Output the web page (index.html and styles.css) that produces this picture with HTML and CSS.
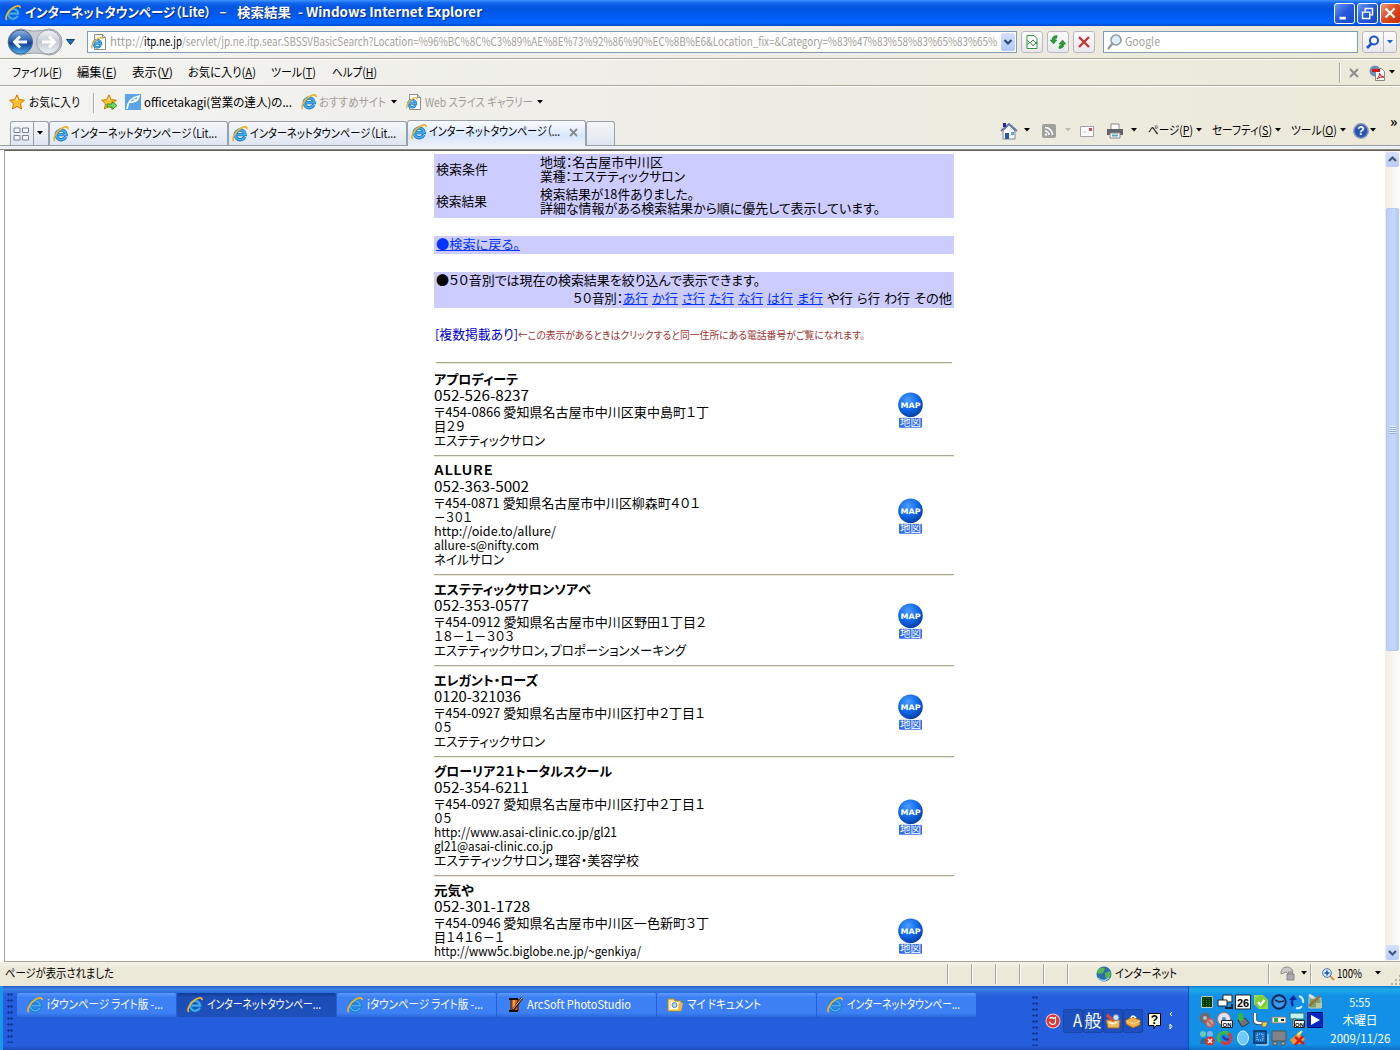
FILE: index.html
```html
<!DOCTYPE html>
<html lang="ja">
<head>
    <meta charset="UTF-8">
    <title>インターネットタウンページ（Lite） － 検索結果</title>
    <link rel="stylesheet" href="styles.css">
</head>
<body>
    <svg class="defs" width="0" height="0">
        <defs>
            <radialGradient id="ball" cx="40%" cy="30%" r="75%"><stop offset="0" stop-color="#4c9cff"/><stop offset=".55" stop-color="#0f68e8"/><stop offset="1" stop-color="#063a9c"/></radialGradient>
            <linearGradient id="back" x2="0" y2="1"><stop offset="0" stop-color="#8fb4e0"/><stop offset=".45" stop-color="#2a62b4"/><stop offset=".55" stop-color="#123f92"/><stop offset="1" stop-color="#4cb4f4"/></linearGradient>
            <linearGradient id="fwd" x2="0" y2="1"><stop offset="0" stop-color="#f4f6f8"/><stop offset=".5" stop-color="#c4cad2"/><stop offset="1" stop-color="#eef2f6"/></linearGradient>
            <symbol id="ie" viewBox="0 0 16 16">
                <path d="M12.800 10.800A5 4.800 0 1 1 13.200 8.600H4.500" fill="none" stroke="#1878c8" stroke-width="3.400"/>
                <path d="M12.800 10.800A5 4.800 0 1 1 13.200 8.600H4.500" fill="none" stroke="#48b0f0" stroke-width="1.600"/>
                <path d="M1.700 15C-.4 12.500 3 6 8 2.800 11.500.4 15.400-.2 15 3.200" fill="none" stroke="#ecb42c" stroke-width="1.700"/>
            </symbol>
            <symbol id="iepage" viewBox="0 0 16 16">
                <path d="M3.5.5h8l3 3v12h-11z" fill="#fff" stroke="#8c8c8c"/><path d="M11.5.5v3h3" fill="#ddd" stroke="#8c8c8c"/>
                <use href="#ie" x="0" y="3" width="12" height="12"/>
            </symbol>
            <symbol id="star" viewBox="0 0 16 16"><path d="M8 .8l2.200 4.800 5.200.6-3.900 3.500 1.100 5.300L8 12.400 3.400 15l1.100-5.300L.6 6.200l5.200-.6z" fill="#ffc02e" stroke="#c87800"/><path d="M8 3l1.200 3.600H6z" fill="#ffe890"/></symbol>
            <symbol id="down" viewBox="0 0 6 4"><path d="M0 0h6L3 3.5z"/></symbol>
            <symbol id="map" viewBox="0 0 26 36">
                <circle cx="12.500" cy="12.800" r="12.300" fill="url(#ball)"/>
                <text x="2.500" y="15.800" class="map-en" textLength="20" lengthAdjust="spacingAndGlyphs">MAP</text>
                <rect x="1" y="25.800" width="23" height="10" rx="1" fill="#2f6cee"/>
                <text x="2" y="34.400" class="map-ja" textLength="21" lengthAdjust="spacingAndGlyphs">地図</text>
            </symbol>
        </defs>
    </svg>

    <header class="titlebar">
        <svg class="i16"><use href="#ie"/></svg>
        <span data-w="186">インターネットタウンページ（Lite）</span>
        <span data-w="8">－</span>
        <span data-w="54">検索結果</span>
        <span data-w="184">- Windows Internet Explorer</span>
        <svg class="win-btn" viewBox="0 0 21 21"><path d="M5 14h7v3H5z" fill="#fff"/></svg>
        <svg class="win-btn" viewBox="0 0 21 21"><path d="M8 8V5h8v7h-3M5 9h8v7H5z" fill="none" stroke="#fff" stroke-width="1.600"/></svg>
        <svg class="win-btn close" viewBox="0 0 21 21"><path d="M5 5l10 10M15 5L5 15" stroke="#fff" stroke-width="2.400"/></svg>
    </header>

    <nav class="navbar">
        <svg width="56" height="28" viewBox="0 0 56 28">
            <path d="M14 1q14 4 28 0a13 13 0 0 1 0 26q-14-4-28 0A13 13 0 0 1 14 1z" fill="#c8ccd2" stroke="#9aa0a8"/>
            <circle cx="13.500" cy="14" r="12" fill="url(#back)" stroke="#41618e"/><path d="M20 14H8M13 8.500L7.500 14l5.500 5.500" fill="none" stroke="#fff" stroke-width="2.800"/>
            <circle cx="41.500" cy="14" r="12" fill="url(#fwd)" stroke="#9ca4ac"/><path d="M35 14h12M42 8.500l5.500 5.500-5.500 5.500" fill="none" stroke="#fff" stroke-width="2.800"/>
        </svg>
        <svg class="nav-arrow" viewBox="0 0 9 6"><path d="M.5.5h8L4.500 5.500z" fill="#1c6cb0" stroke="#14406c"/></svg>
        <div class="address">
            <svg class="i16"><use href="#iepage"/></svg>
            <div class="url"><span data-w="34">http://</span><b data-w="38">itp.ne.jp</b><span data-w="815">/servlet/jp.ne.itp.sear.SBSSVBasicSearch?Location=%96%BC%8C%C3%89%AE%8E%73%92%86%90%EC%8B%E6&amp;Location_fix=&amp;Category=%83%47%83%58%83%65%83%65%</span></div>
            <svg class="drop" viewBox="0 0 14 18"><path d="M3.500 7L7 10.500 10.500 7" fill="none" stroke="#2c4878" stroke-width="2.200"/></svg>
        </div>
        <svg class="tool" viewBox="1 1 20 20"><path d="M6 4.500h7l3 3v10H6z" fill="#fff" stroke="#3c9440"/><path d="M6 9l3 3 3-3 4 4M6 14l3-3 3 4 4-4" fill="none" stroke="#3c9440"/></svg>
        <svg class="tool" viewBox="1 1 20 20"><path d="M10 4.500q-5 0-5 4.500H3l3.500 4L10 9H8q0-2 2-2zM12 17.500q5 0 5-4.500h2l-3.500-4L12 13h2q0 2-2 2z" fill="#2c9c34" stroke="#1c7c24" stroke-width=".5"/></svg>
        <svg class="tool" viewBox="1 1 20 20"><path d="M6 6l10 10M16 6L6 16" stroke="#c03438" stroke-width="2.400"/></svg>
        <div class="search">
            <svg class="i16" viewBox="0 0 16 16"><path d="M6 9l-5 6" stroke="#999" stroke-width="2.400"/><circle cx="9" cy="6" r="5" fill="#d8efff" stroke="#8a98a8" stroke-width="1.500"/></svg>
            <span data-w="35">Google</span>
        </div>
        <svg class="tool wide" viewBox="1 1 33 20"><path d="M21.500 0v22" stroke="#b8b8c0"/><path d="M10 12l-5 5" stroke="#1c50d0" stroke-width="2.600"/><circle cx="12" cy="9.500" r="4" fill="#fff" stroke="#1c50d0" stroke-width="2"/><path d="M25 9h6l-3 3.500z" fill="#1464c8"/></svg>
    </nav>

    <div class="menubar">
        <span data-w="50">ファイル(<u>F</u>)</span>
        <span data-w="40">編集(<u>E</u>)</span>
        <span data-w="41">表示(<u>V</u>)</span>
        <span data-w="68">お気に入り(<u>A</u>)</span>
        <span data-w="45">ツール(<u>T</u>)</span>
        <span data-w="45">ヘルプ(<u>H</u>)</span>
        <i class="vline"></i>
        <svg width="10" height="10" viewBox="0 0 10 10"><path d="M1 1l8 8M9 1L1 9" stroke="#8c8c8c" stroke-width="2"/></svg>
        <svg class="i16" viewBox="0 0 16 16"><circle cx="6" cy="6" r="5.500" fill="#6890b8"/><path d="M6.500 3.500h6l3 3v9h-9z" fill="#fff" stroke="#888"/><path d="M3 4h8v3H3z" fill="#d01818"/><path d="M8 14q3-3 2.500-6 1 4 4.500 4-4-.5-7 2" fill="none" stroke="#d01818"/></svg>
        <svg class="down"><use href="#down"/></svg>
    </div>

    <div class="favbar">
        <svg class="i16"><use href="#star"/></svg>
        <span data-w="51">お気に入り</span>
        <i class="vline"></i>
        <svg class="i16" viewBox="0 0 16 16"><use href="#star"/><path d="M6 10h5V7.500l5 4-5 4V13H6z" fill="#70d858" stroke="#208818" stroke-width=".8"/></svg>
        <svg class="i16" viewBox="0 0 16 16"><path d="M0 0h16v16H0z" fill="#5ca4e8"/><path d="M2 15Q3 4 14 2q-1 5-6 6M5 8q4 1 5-3" fill="none" stroke="#fff" stroke-width="1.600"/></svg>
        <span data-w="148">officetakagi(営業の達人)の...</span>
        <svg class="i16"><use href="#ie"/></svg>
        <span class="dim" data-w="67">おすすめサイト</span>
        <svg class="down"><use href="#down"/></svg>
        <svg class="i16"><use href="#iepage"/></svg>
        <span class="dim" data-w="108">Web スライス ギャラリー</span>
        <svg class="down"><use href="#down"/></svg>
    </div>

    <div class="tabrow">
        <div class="quick">
            <svg width="17" height="14" viewBox="0 0 17 14"><path d="M1 1h6v4.500H1zM9.500 1h6v4.500h-6zM1 8.500h6V13H1zM9.500 8.500h6V13h-6z" fill="#f4f6fa" stroke="#7c8494"/></svg>
            <i></i>
            <svg class="down"><use href="#down"/></svg>
        </div>
        <div class="tab"><svg class="i16"><use href="#ie"/></svg><span data-w="146">インターネットタウンページ（Lit...</span></div>
        <div class="tab"><svg class="i16"><use href="#ie"/></svg><span data-w="146">インターネットタウンページ（Lit...</span></div>
        <div class="tab active"><svg class="i16"><use href="#ie"/></svg><span data-w="131">インターネットタウンページ（...</span><svg class="tab-x" viewBox="0 0 9 9"><path d="M1 1l7 7M8 1L1 8" stroke="#888" stroke-width="1.800"/></svg></div>
        <div class="tab blank"></div>
        <div class="commands">
            <svg width="18" height="18" viewBox="0 0 18 18"><path d="M3 9v8h12V9L9 3z" fill="#f8f8ff" stroke="#8088a0"/><path d="M1 9l8-7 8 7" fill="none" stroke="#6878a8" stroke-width="2"/><path d="M3 1h3v4H3z" fill="#2828a0"/><path d="M5 11h4v6H5z" fill="#2858b0"/><path d="M11 10h3v3h-3z" fill="#68a8d8"/></svg>
            <svg class="down"><use href="#down"/></svg>
            <svg width="14" height="14" viewBox="0 0 14 14"><rect width="14" height="14" rx="2" fill="#a0a09c"/><path d="M3 7a4 4 0 0 1 4 4M3 3.500A7.500 7.500 0 0 1 10.500 11" fill="none" stroke="#fff" stroke-width="1.500"/><circle cx="4" cy="10.500" r="1.200" fill="#fff"/></svg>
            <svg class="down pale"><use href="#down"/></svg>
            <svg width="14" height="11" viewBox="0 0 14 11"><path d="M.5.5h13v10H.5z" fill="#fcfcfc" stroke="#a0a0a8"/><path d="M9 2h3v3H9z" fill="#d84848"/><path d="M3 6h4" stroke="#ccc"/></svg>
            <svg class="i16" viewBox="0 0 16 16"><path d="M4 1h8v6H4z" fill="#fff" stroke="#888"/><path d="M0 6h16v6H0z" fill="#606468"/><path d="M3 10h10v5H3z" fill="#fff" stroke="#888"/><path d="M5 11.500h6v2H5z" fill="#58a8c0"/></svg>
            <svg class="down"><use href="#down"/></svg>
            <span data-w="45">ページ(<u>P</u>)</span>
            <svg class="down"><use href="#down"/></svg>
            <span data-w="60">セーフティ(<u>S</u>)</span>
            <svg class="down"><use href="#down"/></svg>
            <span data-w="46">ツール(<u>O</u>)</span>
            <svg class="down"><use href="#down"/></svg>
            <svg class="i16" viewBox="0 0 16 16"><circle cx="8" cy="8" r="7.200" fill="#2c54b4" stroke="#8c98b8" stroke-width="1.500"/><text x="8" y="12.200" class="q">?</text></svg>
            <svg class="down"><use href="#down"/></svg>
            <span class="more">»</span>
        </div>
    </div>

    <main class="viewport">
        <div class="page">
            <section class="panel conditions">
                <span data-w="52">検索条件</span>
                <div><p><span data-w="123">地域：名古屋市中川区</span></p><p><span data-w="145">業種：エステティックサロン</span></p></div>
                <span data-w="51">検索結果</span>
                <div><p><span data-w="154">検索結果が18件ありました。</span></p><p><span data-w="340">詳細な情報がある検索結果から順に優先して表示しています。</span></p></div>
            </section>
            <section class="panel"><a data-w="84">●検索に戻る。</a></section>
            <section class="panel kana">
                <p><span data-w="324">●５０音別では現在の検索結果を絞り込んで表示できます。</span></p>
                <p class="rows"><span class="lead" data-w="50">５０音別：</span><a data-w="25">あ行</a><a data-w="26">か行</a><a data-w="23">さ行</a><a data-w="25">た行</a><a data-w="25">な行</a><a data-w="26">は行</a><a data-w="26">ま行</a><span data-w="26">や行</span><span data-w="23">ら行</span><span data-w="26">わ行</span><span data-w="38">その他</span></p>
            </section>
            <p class="note"><span class="multi" data-w="83">[複数掲載あり]</span><small data-w="347">←この表示があるときはクリックすると同一住所にある電話番号がご覧になれます。</small></p>

            <article class="entry first">
                <div>
                    <h2><span data-w="84">アプロディーテ</span></h2>
                    <p class="tel"><span data-w="95">052-526-8237</span></p>
                    <p><span data-w="275">〒454-0866 愛知県名古屋市中川区東中島町１丁</span></p>
                    <p><span data-w="31">目２９</span></p>
                    <p><span data-w="111">エステティックサロン</span></p>
                </div>
                <svg class="map"><use href="#map"/></svg>
            </article>
            <article class="entry">
                <div>
                    <h2><span data-w="59">ＡＬＬＵＲＥ</span></h2>
                    <p class="tel"><span data-w="95">052-363-5002</span></p>
                    <p><span data-w="266">〒454-0871 愛知県名古屋市中川区柳森町４０１</span></p>
                    <p><span data-w="38">－３０１</span></p>
                    <p><span data-w="122">http://oide.to/allure/</span></p>
                    <p><span data-w="105">allure-s@nifty.com</span></p>
                    <p><span data-w="70">ネイルサロン</span></p>
                </div>
                <svg class="map"><use href="#map"/></svg>
            </article>
            <article class="entry">
                <div>
                    <h2><span data-w="157">エステティックサロンソアベ</span></h2>
                    <p class="tel"><span data-w="95">052-353-0577</span></p>
                    <p><span data-w="272">〒454-0912 愛知県名古屋市中川区野田１丁目２</span></p>
                    <p><span data-w="80">１８－１－３０３</span></p>
                    <p><span data-w="252">エステティックサロン，プロポーションメーキング</span></p>
                </div>
                <svg class="map"><use href="#map"/></svg>
            </article>
            <article class="entry">
                <div>
                    <h2><span data-w="104">エレガント・ローズ</span></h2>
                    <p class="tel"><span data-w="87">0120-321036</span></p>
                    <p><span data-w="271">〒454-0927 愛知県名古屋市中川区打中２丁目１</span></p>
                    <p><span data-w="18">０５</span></p>
                    <p><span data-w="111">エステティックサロン</span></p>
                </div>
                <svg class="map"><use href="#map"/></svg>
            </article>
            <article class="entry">
                <div>
                    <h2><span data-w="178">グローリア２１トータルスクール</span></h2>
                    <p class="tel"><span data-w="95">052-354-6211</span></p>
                    <p><span data-w="271">〒454-0927 愛知県名古屋市中川区打中２丁目１</span></p>
                    <p><span data-w="18">０５</span></p>
                    <p><span data-w="183">http://www.asai-clinic.co.jp/gl21</span></p>
                    <p><span data-w="119">gl21@asai-clinic.co.jp</span></p>
                    <p><span data-w="205">エステティックサロン，理容・美容学校</span></p>
                </div>
                <svg class="map"><use href="#map"/></svg>
            </article>
            <article class="entry last">
                <div>
                    <h2><span data-w="40">元気や</span></h2>
                    <p class="tel"><span data-w="96">052-301-1728</span></p>
                    <p><span data-w="275">〒454-0946 愛知県名古屋市中川区一色新町３丁</span></p>
                    <p><span data-w="70">目１４１６－１</span></p>
                    <p><span data-w="207">http://www5c.biglobe.ne.jp/~genkiya/</span></p>
                </div>
                <svg class="map"><use href="#map"/></svg>
            </article>
        </div>
        <div class="scrollbar">
            <svg class="sb-btn" viewBox="0 0 13 15"><path d="M3 9l3.500-3.500L10 9" fill="none" stroke="#40587c" stroke-width="2.200"/></svg>
            <div class="thumb"><i></i><i></i><i></i><i></i></div>
            <svg class="sb-btn" viewBox="0 0 13 15"><path d="M3 6l3.500 3.500L10 6" fill="none" stroke="#40587c" stroke-width="2.200"/></svg>
        </div>
    </main>

    <footer class="status">
        <span data-w="109">ページが表示されました</span>
        <i class="vline"></i><i class="vline"></i><i class="vline"></i><i class="vline"></i><i class="vline"></i><i class="vline"></i>
        <svg class="i16" viewBox="0 0 16 16"><circle cx="8" cy="8" r="7.500" fill="#2c6cb0"/><path d="M3 3q4-3 6 0l-2 4-4 1-2-2zM9 7l5-2q2 4-1 7l-3 2z" fill="#58b850"/><path d="M2 12q5 5 11 0" fill="none" stroke="#8cc8e8" stroke-width="1.500"/></svg>
        <span data-w="62">インターネット</span>
        <i class="vline"></i>
        <svg class="i16" viewBox="0 0 16 16"><path d="M1 8a6 6 0 0 1 12-2L9 9 6 6z" fill="#c8c8c4" stroke="#909090"/><path d="M7 8h7v6H7z" fill="#aaa" stroke="#888"/><path d="M8.500 8V6h4v2" fill="none" stroke="#888"/></svg>
        <svg class="down"><use href="#down"/></svg>
        <i class="vline"></i>
        <svg width="13" height="13" viewBox="0 0 13 13"><path d="M8 8l4 4" stroke="#c89848" stroke-width="2"/><circle cx="5" cy="5" r="4.300" fill="#e0f0ff" stroke="#3870b8"/><path d="M2.500 5h5M5 2.500v5" stroke="#1850b0" stroke-width="1.500"/></svg>
        <span data-w="25">100%</span>
        <svg class="down"><use href="#down"/></svg>
        <svg class="grip" viewBox="0 0 12 12"><path d="M9 1h2v2H9zM5 5h2v2H5zM9 5h2v2H9zM1 9h2v2H1zM5 9h2v2H5zM9 9h2v2H9z" fill="#b8b4a4"/></svg>
    </footer>

    <footer class="taskbar">
        <i class="dots"></i>
        <div class="tasks">
            <div class="task"><svg class="i16"><use href="#ie"/></svg><span data-w="116">iタウンページ ライト版 -...</span></div>
            <div class="task pressed"><svg class="i16"><use href="#ie"/></svg><span data-w="114">インターネットタウンペー...</span></div>
            <div class="task"><svg class="i16"><use href="#ie"/></svg><span data-w="116">iタウンページ ライト版 -...</span></div>
            <div class="task"><svg class="i16" viewBox="0 0 16 16"><path d="M4 2h7v12H4z" fill="#e05818" stroke="#301808"/><path d="M2 2h9M2 14h9" stroke="#181008" stroke-width="2"/><path d="M7 3v10" stroke="#f8c060" stroke-width="1.500"/><path d="M15 1L6 13" stroke="#301808" stroke-width="2.500"/><path d="M15 1L6 12" stroke="#f0c070"/></svg><span data-w="104">ArcSoft PhotoStudio</span></div>
            <div class="task"><svg class="i16" viewBox="0 0 16 16"><path d="M1 2h6l1 2h6v10H1z" fill="#fce890" stroke="#b08820"/><path d="M4 5h7v7H4z" fill="#fff"/><circle cx="7.500" cy="8" r="2.500" fill="#a8d8f8" stroke="#5888a8"/><path d="M12 6h4l-2 8h-3z" fill="#f0b840"/></svg><span data-w="74">マイ ドキュメント</span></div>
            <div class="task"><svg class="i16"><use href="#ie"/></svg><span data-w="113">インターネットタウンペー...</span></div>
        </div>
        <div class="langbar">
            <i class="dots"></i>
            <svg class="i16" viewBox="0 0 16 16"><circle cx="8" cy="8" r="7.500" fill="#f0c8c8"/><circle cx="8" cy="8" r="6.500" fill="#d83838"/><path d="M4.500 5.500q2-2 4 0l2-1v4q0 3-3 3-3-1-3-3" stroke="#fff" stroke-width="1.200" fill="none"/></svg>
            <b class="mode"><span data-w="9">A</span></b>
            <b><span data-w="17">般</span></b>
            <b><svg class="i16" viewBox="0 0 16 16"><path d="M1 7h14l-1 8H3z" fill="#f0b860" stroke="#a86818"/><path d="M2 2l7 6" stroke="#e04838" stroke-width="3"/><circle cx="11" cy="4.500" r="3" fill="#c8e8ff" stroke="#5880a8"/><path d="M4 9q4 3 8 0" fill="none" stroke="#fff0d0" stroke-width="2"/></svg></b>
            <b><svg class="i16" viewBox="0 0 16 16"><path d="M1 7l6-3 8 3v5l-7 3-7-4z" fill="#f0b04c" stroke="#a06010"/><path d="M6 5q1-4 5 0" fill="none" stroke="#fff" stroke-width="1.500"/><path d="M1 8l7 3 7-3" fill="none" stroke="#ffe0a0"/></svg></b>
            <svg width="14" height="16" viewBox="0 0 14 16"><path d="M.5.500h12v12H8l-2 3v-3H.500z" fill="#ffffe0" stroke="#000"/><text x="6.500" y="11" class="q dark">?</text></svg>
            <svg width="5" height="18" viewBox="0 0 5 18"><path d="M3 0L1 2l2 2M1 12v5l2-2.500z" fill="none" stroke="#fff"/></svg>
        </div>
        <div class="tray">
            <div class="icons">
                <svg viewBox="0 0 16 16"><path d="M2.500 2.500h11v11h-11z" fill="#083808" stroke="#b8c8b8"/><path d="M4.500 4v9M7.500 4v9M10.500 4v9" stroke="#188818" stroke-dasharray="1 1"/></svg>
                <svg viewBox="0 0 16 16"><path d="M6 1h9v7H6z" fill="#fff" stroke="#222"/><path d="M1 6h9v6H1z" fill="#fff" stroke="#222"/><path d="M8 14h7v-4" stroke="#222" fill="none" stroke-width="2"/></svg>
                <svg viewBox="0 0 16 16"><path d="M.5 1h15v14H.5z" fill="#fff" stroke="#222"/><text x="8" y="13" class="num">26</text></svg>
                <svg viewBox="0 0 16 16"><path d="M1 1h9l5 5v9H6L1 10z" fill="#98dc48"/><circle cx="8" cy="8" r="6" fill="#80cc38"/><path d="M5 8l2.500 3L11.500 6" stroke="#fff" stroke-width="2.200" fill="none"/></svg>
                <svg viewBox="0 0 16 16"><circle cx="8" cy="8" r="6.700" fill="#3c98e8" stroke="#082858" stroke-width="2"/><path d="M4 6l4 2 5-1" fill="none" stroke="#082858" stroke-width="1.500"/></svg>
                <svg viewBox="0 0 16 16"><path d="M4 12q-2-3 0-8" fill="none" stroke="#0828a0" stroke-width="2.500"/><path d="M0 6l4.500-5L8 6z" fill="#0828a0"/><path d="M10 2q5 2 4 7M13 12q-2 3-6 2" fill="none" stroke="#c8f0ff" stroke-width="2"/></svg>
                <svg viewBox="0 0 16 16"><path d="M2 4h12v10H2z" fill="#78a068" stroke="#c8d0c0"/><path d="M2 12L13 2" stroke="#b06030" stroke-width="2"/><path d="M9 9h6v5H9z" fill="#b8c8a0"/><path d="M2 1l5 3" stroke="#ddd" stroke-width="3"/></svg>
                <svg viewBox="0 0 16 16"><circle cx="6" cy="6" r="5.500" fill="#686c70"/><circle cx="6" cy="6" r="2" fill="#bbb"/><circle cx="11" cy="11" r="4" fill="#aaa" stroke="#d85848" stroke-width="1.500"/><path d="M8 8l6 6" stroke="#d85848" stroke-width="1.500"/></svg>
                <svg viewBox="0 0 16 16"><circle cx="7" cy="7" r="6.500" fill="#e8e0f0" stroke="#a87858"/><circle cx="7" cy="7" r="2" fill="#3c90d0"/><path d="M4.500 8.500h11v7h-11z" fill="#fff" stroke="#222"/><text x="10" y="14.500" class="on">ON</text></svg>
                <svg viewBox="0 0 16 16"><path d="M3 8l7-2 4 5-7 4z" fill="#707478" stroke="#333"/><path d="M2 2l6-1v5l2-1-4 5-4-4 2-1z" fill="#38b840"/></svg>
                <svg viewBox="0 0 16 16"><path d="M2 1v7q0 3 4 3h3" fill="none" stroke="#333" stroke-width="4"/><path d="M2 1v7q0 3 4 3h3" fill="none" stroke="#fff" stroke-width="2.500"/><path d="M9 10h6l-2 5H9z" fill="#f0d048" stroke="#666"/></svg>
                <svg viewBox="0 0 16 16"><path d="M1 5h14v6H1z" fill="#f8f8f8" stroke="#777"/><path d="M3 6h4v4H3z" fill="#38a838"/><path d="M10 8h3" stroke="#222" stroke-width="2"/></svg>
                <svg viewBox="0 0 16 16"><path d="M1 1h14v6H1z" fill="#c0f0f0" stroke="#187878"/><path d="M4 7h3v8H4z" fill="#eee" stroke="#555"/><path d="M5.500 8.500h10v7h-10z" fill="#fff" stroke="#222"/><text x="10.500" y="14.500" class="on">ON</text></svg>
                <svg viewBox="0 0 16 16"><path d="M.5.500h15v15H.5z" fill="#0828c0" stroke="#04106c"/><path d="M4 3l9 5-9 5z" fill="#fff"/></svg>
                <svg viewBox="0 0 16 16"><circle cx="4" cy="4" r="3" fill="#68c8b0"/><circle cx="11" cy="4" r="3" fill="#78b8e8"/><path d="M1 14q1-8 6-5l4 5z" fill="#386890"/><circle cx="11" cy="11" r="4.500" fill="#e03020"/><path d="M9 9l4 4M13 9l-4 4" stroke="#fff" stroke-width="1.500"/></svg>
                <svg viewBox="0 0 16 16"><path d="M3 12Q-1 6 5 3q5-2 6 2" stroke="#40b838" fill="none" stroke-width="3"/><path d="M12 3q4 6-1 10-4 2-6-2" stroke="#e03838" fill="none" stroke-width="3"/><path d="M6 6q2 5 6 3" stroke="#2438a8" fill="none" stroke-width="2.500"/></svg>
                <svg viewBox="0 0 16 16"><ellipse cx="8" cy="8" rx="5.500" ry="7" fill="#70c8fc" stroke="#d8f4ff"/></svg>
                <svg viewBox="0 0 16 16"><path d="M1 1h12v12H1z" fill="#186cc0" stroke="#08305c" stroke-width="1.500"/><path d="M4 4h6v6H4z" fill="none" stroke="#b8e0ff" stroke-dasharray="1 1"/><path d="M3 15h12V4" fill="none" stroke="#c8e4ff"/></svg>
                <svg viewBox="0 0 16 16"><path d="M1 1h14v10H1z" fill="#808488" stroke="#555"/><path d="M2 12h4v3H2zM10 12h4v3h-4z" fill="#aaa" stroke="#555"/></svg>
                <svg viewBox="0 0 16 16"><path d="M1 10l6-5 3-4 2 5 4 3-5 5H4z" fill="#f09830"/><path d="M6 7l9 7M14 6l-8 9" stroke="#d81818" stroke-width="2.500"/><path d="M9 5l4-4" stroke="#e8f088" stroke-width="2"/></svg>
            </div>
            <div class="clock">
                <span data-w="21">5:55</span>
                <span data-w="35">木曜日</span>
                <span data-w="60">2009/11/26</span>
            </div>
        </div>
    </footer>

    <script src="fit.js"></script>
</body>
</html>
```
FILE: styles.css
```css
:root {
    --chrome: #ece9d8;
    --line: #aca899;
    --panel: #ccccff;
    --link: #0033ff;
}

* {
    box-sizing: border-box;
}

body {
    margin: 0;
    width: 1400px;
    height: 1050px;
    overflow: hidden;
    background: #fff;
    color: #000;
    font: 12px/14px "Noto Sans CJK JP", "Liberation Sans", sans-serif;
    font-feature-settings: "palt";
}

p, h2 {
    margin: 0;
}

svg {
    display: block;
    flex: none;
}

.defs {
    position: absolute;
}

[data-w] {
    display: inline-block;
    justify-self: start;
    flex: none;
    white-space: pre;
    transform-origin: 0 50%;
    translate: 0 -1px;
}

.i16 {
    width: 16px;
    height: 16px;
}

.down {
    width: 6px;
    height: 4px;
    translate: 0 -1px;
}

.pale {
    fill: #c0bdb0;
}

.dim {
    color: #a09e96;
}

.vline {
    width: 2px;
    height: 20px;
    border-left: 1px solid var(--line);
    border-right: 1px solid #fff;
}

/* window title */
.titlebar {
    display: grid;
    grid-template-columns: 20px 194px 18px 61px 1036px 23px 23px 21px;
    align-items: center;
    height: 26px;
    padding-left: 5px;
    background: linear-gradient(#3c94fc 0, #1464ec 3px, #0054e0 8px, #0060fc 20px, #0066ff 23px, #0044c4 26px);
    color: #fff;
    font-size: 13px;
    font-weight: bold;
    text-shadow: 1px 1px #0a2a7c;
}

.win-btn {
    width: 21px;
    height: 21px;
    border: 1px solid #fff;
    border-radius: 3px;
    background: linear-gradient(135deg, #6c98f4, #2458dc 50%, #1848c4);
}

.win-btn.close {
    background: linear-gradient(135deg, #f09878, #dc4820 50%, #c43008);
}

/* toolbars */
.navbar, .menubar, .favbar, .tabrow {
    background: linear-gradient(90deg, #f3f3f1, #eeede6 50%, var(--chrome));
}

.navbar {
    display: grid;
    grid-template-columns: 59px 21px 934px 26px 26px 30px 259px 36px;
    align-items: center;
    height: 33px;
    padding-left: 7px;
    border-bottom: 1px solid var(--line);
}

.nav-arrow {
    width: 9px;
    height: 6px;
}

.address, .search {
    display: flex;
    align-items: center;
    height: 22px;
    border: 1px solid #7f9db9;
    background: #fff;
    color: #a4a29a;
}

.address {
    width: 930px;
    padding-left: 3px;
}

.url {
    display: flex;
    width: 888px;
    margin-left: 3px;
}

.url b {
    color: #000;
    font-weight: normal;
}

.drop {
    width: 14px;
    height: 18px;
    margin-left: 3px;
    border-radius: 2px;
    background: linear-gradient(#d4e0fc, #b0c8f4);
}

.tool {
    width: 22px;
    height: 22px;
    border: 1px solid #b8b8c4;
    border-radius: 3px;
    background: linear-gradient(#fcfcfc, #e8e8ec);
}

.tool.wide {
    width: 35px;
}

.search {
    width: 255px;
    padding-left: 3px;
    gap: 2px;
}

.menubar {
    display: grid;
    grid-template-columns: 65px 55px 56px 83px 61px 1007px 10px 20px 20px 8px;
    align-items: center;
    height: 27px;
    padding-left: 12px;
    border-top: 1px solid #fff;
    border-bottom: 1px solid var(--line);
}

.favbar {
    display: grid;
    grid-template-columns: 20px 64px 8px 24px 19px 157px 18px 72px 15px 19px 112px 10px;
    align-items: center;
    height: 32px;
    padding-left: 9px;
    border-top: 1px solid #fff;
}

.favbar svg {
    translate: 0 -1px;
}

.tabrow {
    display: flex;
    align-items: flex-end;
    height: 32px;
    padding: 0 0 4px 10px;
    border-bottom: 1px solid #8c8a80;
    box-shadow: inset 0 -3px #eef0fa, inset 0 -4px #98a0ac;
}

.quick, .tab {
    display: flex;
    align-items: center;
    height: 24px;
    border: 1px solid #98a0ac;
    border-bottom: 0;
    border-radius: 3px 3px 0 0;
    background: linear-gradient(#f4f6f8, #dfe6f2);
}

.quick {
    width: 39px;
    padding-left: 2px;
    gap: 3px;
}

.quick i {
    width: 1px;
    height: 24px;
    background: #98a0ac;
}

.tab {
    width: 179px;
    padding-left: 3px;
    gap: 2px;
}

.tab.active {
    height: 26px;
    margin-bottom: -1px;
    padding-bottom: 3px;
    background: linear-gradient(#fafcff, #d8e6fc 60%, #eef0fa);
}

.tab.blank {
    width: 29px;
}

.tab-x {
    width: 9px;
    height: 9px;
    margin-left: 7px;
}

.commands {
    display: grid;
    grid-template-columns: 24px 18px 23px 15px 27px 24px 17px 48px 16px 63px 16px 49px 13px 17px 20px 10px;
    align-items: center;
    height: 28px;
    margin-left: 385px;
}

.more {
    align-self: start;
    font-weight: bold;
    font-size: 14px;
    line-height: 8px;
}

.q {
    fill: #fff;
    font: bold 12px "Liberation Sans", sans-serif;
    text-anchor: middle;
}

.q.dark {
    fill: #000;
}

/* page */
.viewport {
    display: flex;
    justify-content: space-between;
    height: 812px;
    margin-left: 4px;
    border-top: 1px solid #64625a;
    border-left: 1px solid #aca899;
    border-bottom: 1px solid #aca899;
    overflow: hidden;
}

.page {
    width: 520px;
    margin-left: 429px;
    padding-top: 3px;
    font-size: 13px;
}

.panel {
    height: 18px;
    margin-bottom: 18px;
    padding: 0 2px;
    background: var(--panel);
    line-height: 18px;
}

.conditions {
    display: grid;
    grid-template: 32px 32px / 104px auto;
    align-items: center;
    height: 64px;
    line-height: 14px;
}

.kana {
    height: 36px;
}

.rows {
    display: flex;
    justify-content: flex-end;
    gap: 4px;
}

.rows .lead + a {
    margin-left: -4px;
}

.panel a {
    color: var(--link);
    text-decoration: underline;
}

.note {
    height: 36px;
    padding-left: 1px;
    line-height: 18px;
    color: #993333;
    white-space: nowrap;
}

.note small {
    font-size: 10px;
}

.multi {
    color: #0000cc;
}

.entry {
    display: flex;
    justify-content: space-between;
    align-items: center;
    height: 91px;
    padding-right: 30px;
    border-top: 1px solid var(--line);
    box-shadow: inset 0 1px #ece9d8;
}

.entry.first {
    height: 93px;
    border-top: 0;
    box-shadow: none;
    background: linear-gradient(var(--line) 1px, #ece9d8 1px, #ece9d8 2px, #fff 2px) no-repeat 2px 0 / 516px 100%;
}

.entry:nth-of-type(2), .entry:nth-of-type(5), .entry.last {
    height: 119px;
}

.entry > div {
    align-self: flex-start;
    padding-top: 7px;
}

.entry.first > div {
    padding-top: 10px;
}

.entry h2 {
    height: 16px;
    font-size: 13px;
    line-height: 16px;
}

.entry p {
    height: 14px;
}

.entry p [data-w] {
    translate: 0 0;
}

.entry .tel {
    height: 17px;
    font-size: 14px;
    line-height: 16px;
}

.entry .tel [data-w] {
    translate: 0 -1px;
}

.map {
    width: 26px;
    height: 36px;
    margin-top: 1px;
}

.entry.first .map {
    margin-top: 3px;
}

.map-en {
    fill: #fff;
    font: bold 7.5px "DejaVu Sans", sans-serif;
}

.map-ja {
    fill: #fff;
    font: 10px "Noto Sans CJK JP", sans-serif;
}

.scrollbar {
    display: flex;
    flex-direction: column;
    width: 15px;
    padding: 1px 1px 1px 0;
    background: linear-gradient(90deg, #f0eee4, #fefefa);
}

.sb-btn {
    width: 13px;
    height: 15px;
    margin-left: 1px;
    border-radius: 2px;
    background: linear-gradient(#d4e0fe, #b8ccf8);
}

.thumb {
    display: flex;
    flex-direction: column;
    justify-content: center;
    align-items: center;
    gap: 1px;
    height: 443px;
    margin: 41px 0 auto 1px;
    border: 1px solid #b4c8f4;
    border-radius: 2px;
    background: linear-gradient(90deg, #bccefa, #c8d8ff 60%, #b4c8f6);
}

.thumb i {
    width: 7px;
    height: 1px;
    background: #eef4fe;
    box-shadow: 0 1px #8cacec;
}

/* status bar */
.status {
    display: grid;
    grid-template-columns: 942px 24px 24px 24px 24px 24px 29px 19px 153px 12px 21px 9px 12px 15px 38px 15px 12px;
    align-items: center;
    height: 24px;
    padding-left: 5px;
    background: linear-gradient(#f4f2e8, #ece9d8 30%, #ece9d8);
}

.grip {
    align-self: end;
    width: 12px;
    height: 12px;
}

/* taskbar */
.taskbar {
    display: flex;
    height: 64px;
    background: linear-gradient(#2458c0 0, #3c84e8 3px, #2c68e0 7px, #245edc 12px, #245edc 60px, #1c48b8);
    border-left: 3px solid #1898e8;
    color: #fff;
}

.dots {
    width: 6px;
    height: 50px;
    background: radial-gradient(circle at 1.5px 1.5px, #14389c 1px, transparent 1.5px) 0 0 / 3px 6px;
    align-self: center;
}

.taskbar > .dots {
    margin-left: 4px;
}

.tasks {
    display: flex;
    align-items: flex-start;
    width: 1015px;
    gap: 1px;
    padding: 7px 0 0 4px;
}

.task {
    display: flex;
    align-items: center;
    width: 159px;
    height: 24px;
    padding-left: 10px;
    gap: 4px;
    border-radius: 2px;
    background: linear-gradient(#5c9cfc, #3c80f4 4px, #3c80f4 20px, #2c68dc);
}

.task.pressed {
    background: linear-gradient(#103c94, #1c4cb4 4px, #1e50bc);
}

.langbar {
    display: grid;
    grid-template-columns: 13px 18px 20px 20px 20px 25px 21px 8px;
    align-items: center;
    width: 160px;
    padding-top: 5px;
    padding-left: 4px;
}

.langbar b {
    display: flex;
    align-items: center;
    justify-content: center;
    width: 20px;
    height: 24px;
    border: 1px solid #1846a8;
    border-radius: 2px;
    background: #1c50c0;
    font-size: 17px;
    font-weight: normal;
    line-height: 22px;
}

.langbar .mode {
    justify-content: flex-end;
}

.tray {
    display: flex;
    width: 212px;
    padding: 8px 0 0 10px;
    border-left: 1px solid #0c50a8;
    background: linear-gradient(#1474d0 0, #1cace8 3px, #1290e8 10px, #1290e8 58px, #0c70c8);
}

.icons {
    display: grid;
    grid-template: repeat(3, 18px) / repeat(7, 18px);
}

.icons svg {
    width: 16px;
    height: 16px;
}

.num {
    font: bold 11px "Liberation Sans", sans-serif;
    text-anchor: middle;
}

.on {
    font: bold 6px "Liberation Sans", sans-serif;
    text-anchor: middle;
}

.clock {
    display: flex;
    flex-direction: column;
    align-items: center;
    width: 68px;
    margin-left: 1px;
    line-height: 18px;
}
```
FILE: fit.js
```js
// squeeze every label to its own pixel width
document.querySelectorAll('[data-w]').forEach(el => {
    const want = Number(el.dataset.w);
    const have = el.getBoundingClientRect().width;
    if (!have) return;

    el.style.transform = `scaleX(${want / have})`;
    // centred labels in the clock take the gap on both sides
    if (el.closest('.clock')) {
        el.style.transformOrigin = '50% 50%';
    } else {
        el.style.marginRight = `${want - have}px`;
    }
});
```
